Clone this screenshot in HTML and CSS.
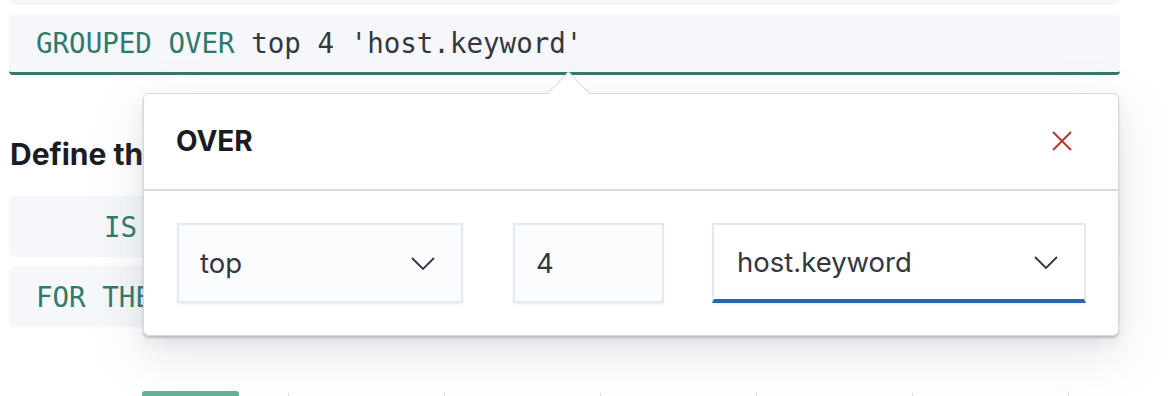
FILE: index.html
```html
<!DOCTYPE html>
<html lang="en">
<head>
    <meta charset="UTF-8">
    <meta name="viewport" content="width=device-width, initial-scale=1.0">
    <title>Threshold alert - grouped over</title>
    <link rel="stylesheet" href="styles.css">
</head>
<body>
    <div class="page">
        <!-- expression list -->
        <div class="expr expr-prev"></div>
        <div class="expr expr-active">
            <span class="kw">GROUPED OVER</span>&nbsp;top 4 'host.keyword'
        </div>

        <h3 class="section-title">Define the condition</h3>

        <div class="expr expr-indent">
            <span class="kw">IS ABOVE</span>&nbsp;1000
        </div>
        <div class="expr">
            <span class="kw">FOR THE LAST</span>&nbsp;5 minutes
        </div>

        <!-- chart preview, only the top edge is visible -->
        <div class="chart">
            <div class="bar"></div>
            <div class="ticks">
                <span class="tick"></span>
                <span class="tick"></span>
                <span class="tick"></span>
                <span class="tick"></span>
                <span class="tick"></span>
                <span class="tick"></span>
            </div>
        </div>

        <!-- popover for the OVER expression -->
        <div class="popover">
            <span class="arrow"></span>
            <div class="popover-header">
                <span class="popover-title">OVER</span>
                <button class="close" aria-label="Close">
                    <svg width="20" height="20" viewBox="0 0 20 20">
                        <path d="M1 1 L19 19 M19 1 L1 19" stroke="#b8382f" stroke-width="2" fill="none"/>
                    </svg>
                </button>
            </div>
            <div class="popover-body">
                <div class="field field-agg">
                    <span>top</span>
                    <svg class="chevron" width="24" height="13" viewBox="0 0 24 13">
                        <path d="M1 1 L12 12 L23 1" stroke="#343741" stroke-width="1.8" fill="none"/>
                    </svg>
                </div>
                <div class="field field-num">
                    <span>4</span>
                </div>
                <div class="field field-term focused">
                    <span>host.keyword</span>
                    <svg class="chevron" width="24" height="13" viewBox="0 0 24 13">
                        <path d="M1 1 L12 12 L23 1" stroke="#343741" stroke-width="1.8" fill="none"/>
                    </svg>
                </div>
            </div>
        </div>
    </div>
</body>
</html>
```

FILE: styles.css
```css
* {
    box-sizing: border-box;
    margin: 0;
    padding: 0;
}

body {
    font-family: Inter, "Noto Sans", sans-serif;
    background-color: #fff;
    color: #343741;
    overflow: hidden;
}

.page {
    position: relative;
    display: flow-root;
    padding: 0 48px 0 9px;
}

/* expression buttons */
.expr {
    display: flex;
    align-items: center;
    height: 61px;
    padding: 0 27px;
    margin-top: 9px;
    background-color: #f5f7fa;
    border-radius: 6px;
    font-family: "DejaVu Sans Mono", "Liberation Mono", monospace;
    font-size: 27.5px;
    color: #343741;
    white-space: nowrap;
    width: 1111px;
}

.expr-prev {
    height: 40px;
    margin-top: -35px;
}

.expr-active {
    height: 61px;
    border-bottom: 3px solid #33796b;
    border-radius: 6px 6px 4px 4px;
}

.expr-indent {
    padding-left: 95px;
}

.kw {
    color: #2f7a6c;
}

.section-title {
    margin-top: 61px;
    margin-bottom: 24px;
    padding-left: 1px;
    font-size: 30px;
    line-height: 36px;
    font-weight: 700;
    color: #1a1c21;
}

.section-title + .expr {
    margin-top: 0;
}

/* chart preview */
.chart {
    display: flex;
    align-items: flex-end;
    height: 10px;
    margin-top: 64px;
    padding-left: 133px;
}

.bar {
    width: 97px;
    height: 10px;
    background-color: #67b198;
    border-radius: 3px 3px 0 0;
}

.ticks {
    display: flex;
    gap: 155px;
    margin-left: 49px;
    margin-bottom: 5px;
}

.tick {
    width: 1px;
    height: 3px;
    background-color: #d3dae6;
}

/* popover */
.popover {
    position: absolute;
    left: 143px;
    top: 93px;
    width: 976px;
    height: 243px;
    background-color: #fff;
    border: 1px solid #d3dae6;
    border-radius: 6px;
    box-shadow: 0 2px 2px rgba(105, 112, 125, 0.35),
                0 8px 16px rgba(105, 112, 125, 0.10),
                0 18px 56px rgba(105, 112, 125, 0.16);
    z-index: 10;
}

.arrow {
    position: absolute;
    left: 409px;
    top: -16px;
    width: 31px;
    height: 31px;
    background-color: #fff;
    border-top: 1px solid #d3dae6;
    border-left: 1px solid #d3dae6;
    transform: rotate(45deg);
}

.popover-header {
    position: relative;
    display: flex;
    align-items: center;
    justify-content: space-between;
    height: 97px;
    padding: 0 46px 2px 32px;
    border-bottom: 2px solid #d3dae6;
}

.popover-title {
    font-size: 28px;
    font-weight: 700;
    color: #1a1c21;
}

.close {
    display: flex;
    background: none;
    border: none;
    cursor: pointer;
}

.popover-body {
    display: flex;
    padding: 32px 32px 32px 33px;
}

/* form fields */
.field {
    display: flex;
    align-items: center;
    justify-content: space-between;
    height: 80px;
    padding: 0 26px 0 21px;
    background-color: #fbfcfd;
    border: 2px solid #e4e8ef;
    box-shadow: 0 2px 3px -1px rgba(52, 55, 65, 0.12);
    font-size: 27.5px;
    color: #343741;
}

.field-agg {
    width: 286px;
}

.field-num {
    width: 151px;
    margin-left: 50px;
}

.field-term {
    width: 374px;
    margin-left: 48px;
    padding-left: 23px;
}

.field.focused {
    background-color: #fff;
    border-bottom: 4px solid #2f64ad;
}

.chevron {
    display: block;
}
```
